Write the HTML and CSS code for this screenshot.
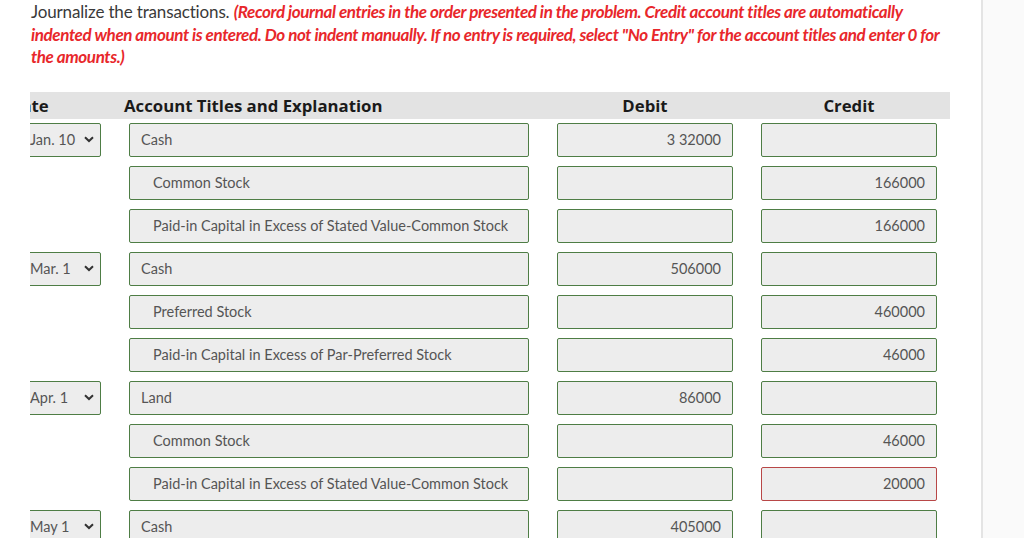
FILE: index.html
```html
<!DOCTYPE html>
<html>
<head>
<meta charset="utf-8">
<link rel="stylesheet" href="styles.css">
</head>
<body>
<div class="page">
  <main class="main">
    <p class="intro">Journalize the transactions. <em class="note">(Record journal entries in the order presented in the problem. Credit account titles are automatically indented when amount is entered. Do not indent manually. If no entry is required, select "No Entry" for the account titles and enter 0 for the amounts.)</em></p>
    <div class="table-wrap">
      <div class="journal">
        <div class="head">
          <div class="h-date">Date</div>
          <div class="h-acct">Account Titles and Explanation</div>
          <div class="h-num">Debit</div>
          <div class="h-num">Credit</div>
        </div>

        <div class="row">
          <div class="sel"><span>Jan. 10</span><svg class="chev" viewBox="0 0 10 7" width="10" height="7"><path d="M1 1.2 L5 5 L9 1.2" fill="none" stroke="#333" stroke-width="2"/></svg></div>
          <div class="fld">Cash</div>
          <div class="fld num">3 32000</div>
          <div class="fld num"></div>
        </div>
        <div class="row">
          <div class="blank"></div>
          <div class="fld indent">Common Stock</div>
          <div class="fld num"></div>
          <div class="fld num">166000</div>
        </div>
        <div class="row">
          <div class="blank"></div>
          <div class="fld indent">Paid-in Capital in Excess of Stated Value-Common Stock</div>
          <div class="fld num"></div>
          <div class="fld num">166000</div>
        </div>

        <div class="row">
          <div class="sel"><span>Mar. 1</span><svg class="chev" viewBox="0 0 10 7" width="10" height="7"><path d="M1 1.2 L5 5 L9 1.2" fill="none" stroke="#333" stroke-width="2"/></svg></div>
          <div class="fld">Cash</div>
          <div class="fld num">506000</div>
          <div class="fld num"></div>
        </div>
        <div class="row">
          <div class="blank"></div>
          <div class="fld indent">Preferred Stock</div>
          <div class="fld num"></div>
          <div class="fld num">460000</div>
        </div>
        <div class="row">
          <div class="blank"></div>
          <div class="fld indent">Paid-in Capital in Excess of Par-Preferred Stock</div>
          <div class="fld num"></div>
          <div class="fld num">46000</div>
        </div>

        <div class="row">
          <div class="sel"><span>Apr. 1</span><svg class="chev" viewBox="0 0 10 7" width="10" height="7"><path d="M1 1.2 L5 5 L9 1.2" fill="none" stroke="#333" stroke-width="2"/></svg></div>
          <div class="fld">Land</div>
          <div class="fld num">86000</div>
          <div class="fld num"></div>
        </div>
        <div class="row">
          <div class="blank"></div>
          <div class="fld indent">Common Stock</div>
          <div class="fld num"></div>
          <div class="fld num">46000</div>
        </div>
        <div class="row">
          <div class="blank"></div>
          <div class="fld indent">Paid-in Capital in Excess of Stated Value-Common Stock</div>
          <div class="fld num"></div>
          <div class="fld num wrong">20000</div>
        </div>

        <div class="row">
          <div class="sel"><span>May 1</span><svg class="chev" viewBox="0 0 10 7" width="10" height="7"><path d="M1 1.2 L5 5 L9 1.2" fill="none" stroke="#333" stroke-width="2"/></svg></div>
          <div class="fld">Cash</div>
          <div class="fld num">405000</div>
          <div class="fld num"></div>
        </div>
      </div>
    </div>
  </main>
  <aside class="side"></aside>
</div>
</body>
</html>
```

FILE: styles.css
```css
html, body {
  margin: 0;
  padding: 0;
  background: #ffffff;
  overflow: hidden;
}
body {
  font-family: Lato, "Open Sans", sans-serif;
  color: #333333;
}
.page {
  display: flex;
  width: 1024px;
  height: 538px;
  overflow: hidden;
}
.main {
  width: 981px;
  flex: none;
  overflow: hidden;
}
.side {
  flex: 1;
  border-left: 2px solid #e4e4e4;
  background: #fafafa;
}
.intro {
  margin: 0;
  padding: 1px 22px 0 31px;
  font-size: 17px;
  line-height: 22.5px;
  color: #3a3a3a;
  letter-spacing: -0.15px;
}
.note {
  color: #e8272b;
  font-weight: 700;
  font-style: italic;
  letter-spacing: -0.4px;
}
.table-wrap {
  margin: 23px 0 0 30px;
  width: 920px;
  overflow: hidden;
}
.journal {
  margin-left: -9px;
  width: 929px;
}
.head {
  display: grid;
  grid-template-columns: 80px 400px 176px 176px;
  column-gap: 28px;
  height: 27px;
  align-items: center;
  background: #e3e3e3;
  font-family: "Open Sans", sans-serif;
  font-weight: 700;
  font-size: 16.75px;
  color: #1a1a1a;
  margin-bottom: 4px;
  margin-left: -30px;
  padding-left: 30px;
}
.h-date {
  margin-left: -12px;
}
.h-acct {
  margin-left: -5px;
}
.h-num {
  text-align: center;
}
.row {
  display: grid;
  grid-template-columns: 80px 400px 176px 176px;
  column-gap: 28px;
  height: 34px;
  margin-bottom: 9px;
}
.fld, .sel {
  box-sizing: border-box;
  height: 34px;
  border: 1px solid #4e7d45;
  border-radius: 2px;
  background: #ededed;
  font-size: 14.5px;
  color: #555555;
  display: flex;
  align-items: center;
  padding: 0 11px;
  white-space: nowrap;
  overflow: hidden;
}
.fld.indent {
  padding-left: 23px;
}
.fld.num {
  justify-content: flex-end;
  padding-right: 11px;
}
.fld.wrong {
  border-color: #b84747;
}
.sel {
  padding: 0 6px 0 8px;
  justify-content: space-between;
}
.chev {
  display: block;
}
```
